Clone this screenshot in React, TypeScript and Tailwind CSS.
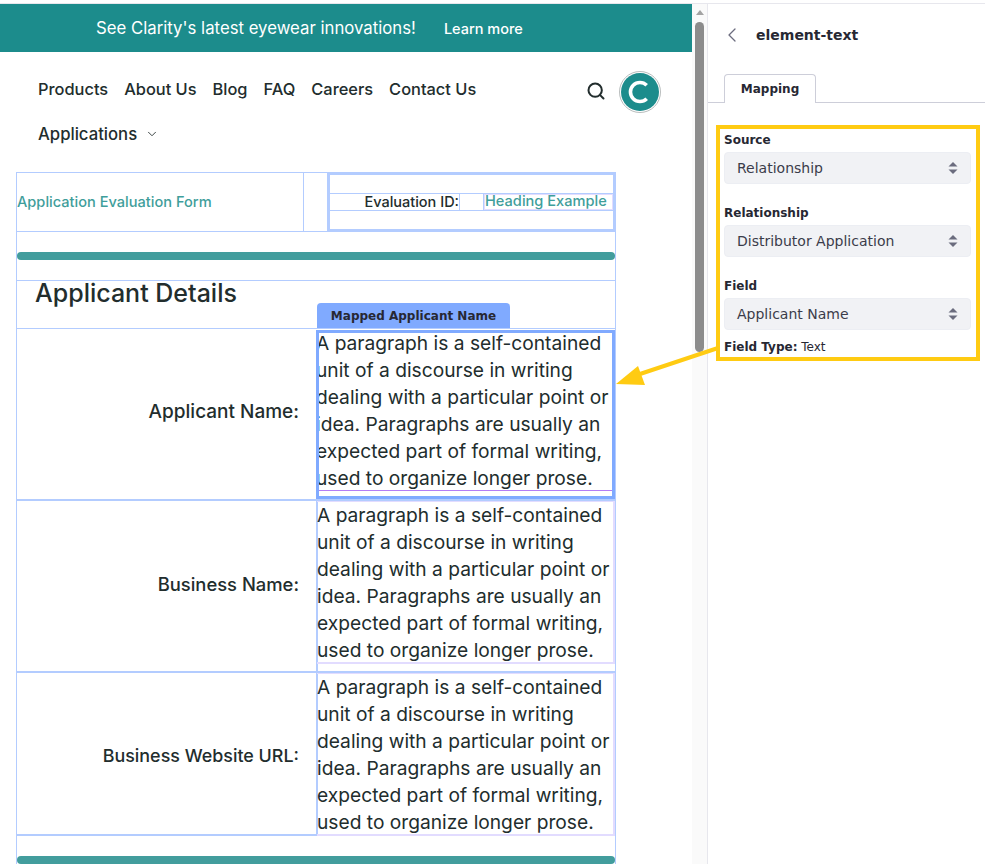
import { ChevronDown, ChevronLeft, Search } from "lucide-react";

const PARAGRAPH =
  "A paragraph is a self-contained unit of a discourse in writing dealing with a particular point or idea. Paragraphs are usually an expected part of formal writing, used to organize longer prose.";

const navLinks = ["Products", "About Us", "Blog", "FAQ", "Careers", "Contact Us"];

function Para() {
  return <p className="w-[298px] text-[19.2px] leading-[27px] text-[#222d2d]">{PARAGRAPH}</p>;
}

function Bar() {
  return <div className="h-2 rounded-[4px] bg-[#429d9d]" />;
}

function DetailRow({
  label,
  labelSize,
  active,
  height,
}: {
  label: string;
  labelSize: string;
  active?: boolean;
  height: string;
}) {
  return (
    <div className={`flex border-b-2 border-[#b3ccff] ${height}`}>
      <div className={`w-[299px] shrink-0 pr-[17px] pt-[70px] text-right font-medium leading-[26px] text-[#222d2d] ${labelSize}`}>
        {label}
      </div>
      {active ? (
        <div className="relative w-[299px] shrink-0 pt-[1px]">
          <Para />
          <div className="absolute inset-x-[3px] bottom-[8px] h-px bg-[#b47cf5]" />
          <div className="absolute inset-x-0 bottom-0 top-[1px] border-[3px] border-[#80aaff]" />
        </div>
      ) : (
        <div className="w-[299px] shrink-0 border-l-2 border-[#b3ccff]">
          <div className="-ml-px h-[163px] border-t border-b-2 border-r-2 border-[#e2dcff]">
            <Para />
          </div>
        </div>
      )}
    </div>
  );
}

function SelectField({ label, value }: { label: string; value: string }) {
  return (
    <div className="mb-5">
      <div className="mb-[3px] text-[12px] font-bold leading-[18px] text-[#272833]">{label}</div>
      <div className="flex h-8 items-center justify-between rounded-[4px] border border-[#eceef3] bg-[#f1f2f5] pl-3 pr-3 text-[14px] text-[#3b3c4a]">
        <span>{value}</span>
        <svg width="10" height="14" viewBox="0 0 10 14" className="fill-[#6b6c7e]">
          <path d="M5 1 L9.5 5.5 H0.5 Z" />
          <path d="M5 13 L0.5 8.5 H9.5 Z" />
        </svg>
      </div>
    </div>
  );
}

export default function App() {
  return (
    <div className="relative mt-[3px] box-border flex h-[861px] w-[985px] overflow-hidden border-t border-[#e7e7ed] bg-white font-['Inter',sans-serif]">
      {/* page preview */}
      <div className="w-[692px] shrink-0">
        <div className="flex h-12 items-center bg-[#1c8c8c] pl-24 pt-px text-white">
          <span className="text-[16.75px]">See Clarity's latest eyewear innovations!</span>
          <span className="ml-7 text-[14.5px] font-medium">Learn more</span>
        </div>

        <div className="relative h-[120px] pl-[38px] text-[#222d2d]">
          <div className="flex h-[75px] items-center gap-4 text-[16.4px] font-medium">
            {navLinks.map((link) => (
              <span key={link}>{link}</span>
            ))}
          </div>
          <div className="flex items-center gap-2 text-[16.7px] font-medium leading-[13px]">
            Applications <ChevronDown className="h-[14px] w-[14px]" strokeWidth={1.5} />
          </div>
          <Search className="absolute left-[586px] top-[29px] h-5 w-5" strokeWidth={2.4} />
          <div className="absolute left-[619px] top-[19px] h-[42px] w-[42px] rounded-full border border-[#b9bdbd] bg-white p-px">
            <div className="flex h-full w-full items-center justify-center rounded-full bg-[#1c8c8c]">
              <svg width="30" height="30" viewBox="0 0 30 30" fill="none">
                <path d="M21.7 8.3 A9.5 9.5 0 1 0 21.7 21.7" stroke="white" strokeWidth="3.6" />
              </svg>
            </div>
          </div>
        </div>

        <div className="ml-4 w-[600px] border-x border-[#b3ccff]">
          <div className="flex h-[60px] border-y border-[#b3ccff]">
            <div className="flex w-[286px] items-center pt-px text-[14.6px] font-medium text-[#3f9e9b]">
              Application Evaluation Form
            </div>
            <div className="w-[25px] border-x border-[#b3ccff]" />
            <div className="flex flex-1 flex-col justify-center border-2 border-[#b3ccff]">
              <div className="flex h-[18px] border-y border-[#b3ccff]">
                <div className="flex w-[130px] items-center justify-end border-r border-[#b3ccff] text-[14.5px] font-medium text-[#222d2d]">
                  Evaluation ID:
                </div>
                <div className="w-[24px] border-r border-[#b3ccff]" />
                <div className="flex flex-1 items-center border border-[#e2dcff] text-[14.6px] font-medium text-[#3f9e9b]">
                  Heading Example
                </div>
              </div>
            </div>
          </div>

          <div className="h-[49px] border-b border-[#b3ccff] pt-5">
            <Bar />
          </div>

          <div className="relative h-[48px] border-b border-[#b3ccff] pl-[18px] text-[25px] font-medium leading-[24px] text-[#222d2d]">
            Applicant Details
            <div className="absolute bottom-0 left-[300px] flex h-[25px] w-[193px] items-center justify-center rounded-t-[4px] bg-[#80aaff] font-['DejaVu_Sans',sans-serif] text-[12px] font-bold text-[#272833]">
              Mapped Applicant Name
            </div>
          </div>

          <DetailRow label="Applicant Name:" labelSize="text-[19px]" active height="h-[172px]" />
          <DetailRow label="Business Name:" labelSize="text-[18.4px]" height="h-[172px]" />
          <DetailRow label="Business Website URL:" labelSize="text-[17.9px]" height="h-[163px]" />

          <div className="pt-5">
            <Bar />
          </div>
        </div>
      </div>

      {/* scrollbar */}
      <div className="relative w-[15px] shrink-0 bg-[#fafafa]">
        <div className="absolute left-[4px] top-[6px] h-0 w-0 border-x-[4px] border-b-[5px] border-x-transparent border-b-[#a3a3a3]" />
        <div className="mx-auto mt-[18px] h-[330px] w-[9px] rounded-[5px] bg-[#8c8c8c]" />
      </div>

      {/* sidebar */}
      <div className="flex-1 border-l border-[#e7e7ed] font-['DejaVu_Sans',sans-serif]">
        <div className="flex h-[70px] items-center pb-2 pl-3">
          <ChevronLeft className="h-6 w-6 text-[#6b6c7e]" strokeWidth={1.3} />
          <span className="ml-3 text-[14px] font-bold text-[#272833]">element-text</span>
        </div>
        <div className="flex h-[29px] border-b border-[#cdced9] pl-4">
          <div className="-mb-px flex w-[92px] items-center justify-center rounded-t-[4px] border border-b-0 border-[#cdced9] bg-white text-[12px] font-bold text-[#272833]">
            Mapping
          </div>
        </div>
        <div className="pl-4 pr-[14px] pt-7">
          <SelectField label="Source" value="Relationship" />
          <SelectField label="Relationship" value="Distributor Application" />
          <SelectField label="Field" value="Applicant Name" />
          <div className="-mt-3 text-[12px] leading-[18px] text-[#272833]">
            <span className="font-bold">Field Type:</span> Text
          </div>
        </div>
      </div>

      {/* annotation */}
      <div className="pointer-events-none absolute left-[716px] top-[121px] h-[236px] w-[264px] border-[4px] border-[#ffcb12]" />
      <svg className="pointer-events-none absolute left-[610px] top-[332px]" width="110" height="54" viewBox="0 0 110 54">
        <path d="M6 48 L28 30 L35 49 Z" fill="#ffcb12" />
        <path d="M30 38 L108 12" stroke="#ffcb12" strokeWidth="4" />
      </svg>
    </div>
  );
}
